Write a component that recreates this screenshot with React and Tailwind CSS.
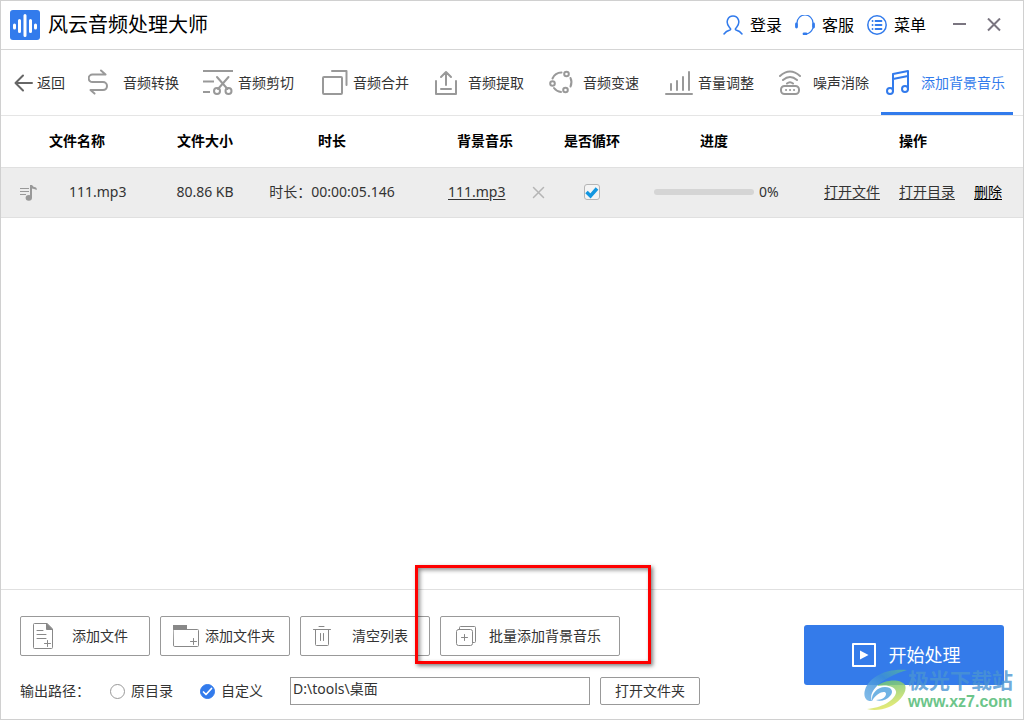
import { useState } from 'react';

const ICON = {
    fill: 'none',
    stroke: 'currentColor',
    strokeWidth: 2,
    strokeLinecap: 'round',
    strokeLinejoin: 'round',
    'aria-hidden': true,
};

const TOOLS = [
    {
        label: '音频转换',
        icon: <path d="M13 2.500l4.500 4H4.500a3.800 3.800 0 0 0 0 7.600H15a4 4 0 0 1 0 8H2.500l4 3.500" />,
    },
    {
        label: '音频剪切',
        icon: (
            <>
                <path d="M0 3h30M0 13.500h11M0 24h7" strokeLinecap="butt" />
                <path d="M14 9l10.500 12M25.500 9L15 21" />
                <circle cx="14" cy="23" r="3" />
                <circle cx="25.500" cy="23" r="3" />
            </>
        ),
    },
    {
        label: '音频合并',
        icon: (
            <>
                <rect x="5" y="9" width="19" height="17" rx="1" />
                <path d="M14 3h14.500v14" />
            </>
        ),
    },
    {
        label: '音频提取',
        icon: <path d="M3 13v13h20V13M8 21h10M13 17V4M8 9l5-5 5 5" />,
    },
    {
        label: '音频变速',
        icon: (
            <>
                <circle cx="18.500" cy="6" r="2.300" />
                <circle cx="4.500" cy="15.500" r="2.300" />
                <circle cx="17.500" cy="22" r="2.300" />
                <path d="M4.500 10.500a10 10 0 0 1 9-6M6 20a10 10 0 0 0 7 4M22.500 10a10 10 0 0 1 0 8.500" />
            </>
        ),
    },
    {
        label: '音量调整',
        icon: <path d="M3 26h26M8 22v-6M14 22v-9M20 22V9M26 22V4" />,
    },
    {
        label: '噪声消除',
        icon: (
            <>
                <rect x="3" y="18" width="18" height="8" rx="3.500" />
                <path d="M2 8q10-9 20 0M5 12q7-6 14 0M9 15.500q3-2.500 6 0M8 22h.1M12 22h.1M16 22h.1" />
            </>
        ),
    },
];

function Tool({ label, icon, active }) {
    return (
        <button
            type="button"
            className={
                active
                    ? 'ml-[11px] flex h-[65px] shrink-0 items-center gap-[5px] border-b-[3px] border-[#327bec] pt-1 pr-2 pl-[5px] text-[#327bec]'
                    : 'flex h-[65px] shrink-0 items-center gap-[5px] pt-px'
            }
        >
            <svg
                {...ICON}
                viewBox="0 0 30 30"
                className={active ? 'size-[30px]' : 'size-[30px] text-[#999]'}
            >
                {icon}
            </svg>
            {label}
        </button>
    );
}

function HeaderButton({ label, children }) {
    return (
        <button type="button" className="flex items-center gap-[7px] text-base">
            <svg {...ICON} strokeWidth={1.5} viewBox="0 0 20 20" className="size-5 text-[#327bec]">
                {children}
            </svg>
            {label}
        </button>
    );
}

function RadioOption({ label, value, selected, onSelect }) {
    return (
        <label className="flex items-center gap-1.5">
            <span className="grid">
                <input
                    type="radio"
                    name="output"
                    value={value}
                    checked={selected}
                    onChange={() => onSelect(value)}
                    className="col-start-1 row-start-1 size-[15px] appearance-none rounded-full border border-[#999] bg-white checked:border-[#327bec] checked:bg-[#327bec]"
                />
                {selected && (
                    <svg
                        {...ICON}
                        viewBox="0 0 15 15"
                        className="pointer-events-none col-start-1 row-start-1 size-[15px] text-white"
                    >
                        <path d="M3.500 8l2.500 2.500 5.500-6" strokeWidth="1.700" />
                    </svg>
                )}
            </span>
            {label}
        </label>
    );
}

export default function App() {
    const [output, setOutput] = useState('custom');
    const [loop, setLoop] = useState(true);
    const [path, setPath] = useState('D:\\tools\\桌面');

    return (
        <div className="flex min-h-screen flex-col overflow-hidden border border-[#d0d0d0] bg-white font-['Noto_Sans','Noto_Sans_CJK_SC',sans-serif] text-sm text-[#333]">
            <header className="flex h-[49px] items-center border-b border-[#d5d5d5] pr-[22px] pl-[9px] text-black">
                <svg viewBox="0 0 30 30" className="size-[30px]" aria-hidden="true">
                    <rect width="30" height="30" rx="3" fill="#327bec" />
                    <path
                        d="M4.500 15v3M9.500 10.500v11M15 5.500v20M20.500 10.500v11M25.500 15v3"
                        stroke="#fff"
                        strokeWidth="3"
                        strokeLinecap="round"
                    />
                </svg>
                <h1 className="ml-2 text-xl">风云音频处理大师</h1>

                <div className="ml-auto flex gap-[13px]">
                    <HeaderButton label="登录">
                        <path d="M1 19q2-3 6-4c1.500-.6 0-2-.8-3C2 7 5 1 10 1s8 6 3.800 11c-.8 1-2.300 2.400-.8 3q4 1 6 4" />
                    </HeaderButton>
                    <HeaderButton label="客服">
                        <path d="M2 8a8 8 0 0 1 16 0M18 13q-2 5-6.500 6" strokeWidth="1.200" />
                        <path d="M1.500 9v3M18.500 9v3M9 18.800h2" strokeWidth="2.800" />
                    </HeaderButton>
                    <HeaderButton label="菜单">
                        <circle cx="10" cy="10" r="9.200" />
                        <path d="M5.500 6h.1M5.500 10h.1M5.500 14h.1M8.500 6h6M8.500 10h6M8.500 14h6" strokeWidth="1.800" />
                    </HeaderButton>
                </div>
                <div className="ml-[27px] flex items-center gap-5 text-[#7a7580]">
                    <button type="button" aria-label="最小化">
                        <svg {...ICON} strokeLinecap="butt" viewBox="0 0 14 14" className="size-3.5">
                            <path d="M0 6h13" />
                        </svg>
                    </button>
                    <button type="button" aria-label="关闭">
                        <svg {...ICON} strokeLinecap="butt" viewBox="0 0 14 14" className="size-3.5">
                            <path d="M1 .5l12 12M13 .5L1 12.500" />
                        </svg>
                    </button>
                </div>
            </header>

            <nav className="flex h-[66px] border-b border-[#e5e5e5] pl-[13px]">
                <button type="button" className="mr-[23px] flex shrink-0 items-center gap-1 pt-px">
                    <svg {...ICON} viewBox="0 0 19 18" className="h-[18px] w-[19px] text-[#666]">
                        <path d="M18 9H2M9 1.500L1.500 9 9 16.500" />
                    </svg>
                    返回
                </button>
                <div className="mr-px flex gap-6">
                    {TOOLS.map((tool) => (
                        <Tool key={tool.label} {...tool} />
                    ))}
                </div>
                <Tool
                    label="添加背景音乐"
                    active
                    icon={
                        <>
                            <circle cx="4" cy="23" r="3" />
                            <circle cx="19" cy="21" r="3" />
                            <path d="M7 23V6l15-3v18M7 11l15-3" />
                        </>
                    }
                />
            </nav>

            <main className="flex-1">
                <table className="w-full table-fixed border-collapse">
                    <colgroup>
                        <col className="w-[152px]" />
                        <col className="w-[104px]" />
                        <col className="w-[150px]" />
                        <col className="w-[156px]" />
                        <col className="w-[58px]" />
                        <col className="w-[186px]" />
                        <col />
                    </colgroup>
                    <thead>
                        <tr className="h-[51px] text-black">
                            <th>文件名称</th>
                            <th>文件大小</th>
                            <th>时长</th>
                            <th>背景音乐</th>
                            <th>是否循环</th>
                            <th>进度</th>
                            <th className="pr-1">操作</th>
                        </tr>
                    </thead>
                    <tbody>
                        <tr className="h-[50px] border-y border-[#e0e0e0] bg-[#ededed] text-center">
                            <td>
                                <div className="flex items-center gap-8 pl-[19px]">
                                    <svg viewBox="0 0 17 17" className="size-[17px] text-[#999]" aria-hidden="true">
                                        <path d="M0 4.500h9M0 7.500h9M0 10.500h6" stroke="currentColor" strokeWidth="1.200" />
                                        <ellipse cx="8.800" cy="13.800" rx="3.200" ry="2.900" fill="currentColor" />
                                        <path d="M10 14V1h2q1 2 4 2.500.9.500.8 2.500Q14 4.500 12 4.500V14z" fill="currentColor" />
                                    </svg>
                                    111.mp3
                                </div>
                            </td>
                            <td>80.86 KB</td>
                            <td className="whitespace-nowrap">时长：00:00:05.146</td>
                            <td>
                                <div className="flex items-center gap-[27px] pl-[41px]">
                                    <a href="#music" className="underline underline-offset-2">111.mp3</a>
                                    <button type="button" aria-label="移除背景音乐">
                                        <svg {...ICON} viewBox="0 0 13 13" className="size-[13px] text-[#b5b5b5]">
                                            <path d="M1.500 1.500l10 10M11.500 1.500l-10 10" strokeWidth="1.500" />
                                        </svg>
                                    </button>
                                </div>
                            </td>
                            <td>
                                <div className="grid justify-center">
                                    <input
                                        type="checkbox"
                                        aria-label="是否循环"
                                        checked={loop}
                                        onChange={(e) => setLoop(e.target.checked)}
                                        className="col-start-1 row-start-1 size-4 appearance-none rounded-[3px] border border-[#b5b5b5] bg-[#f4f4f4]"
                                    />
                                    {loop && (
                                        <svg
                                            {...ICON}
                                            viewBox="0 0 16 16"
                                            className="pointer-events-none col-start-1 row-start-1 size-4 text-[#1296e0]"
                                        >
                                            <path d="M2.500 8l4 4 6.500-7.500" strokeWidth="3.500" strokeLinecap="butt" strokeLinejoin="miter" />
                                        </svg>
                                    )}
                                </div>
                            </td>
                            <td>
                                <div className="flex items-center gap-[5px] pl-[33px]">
                                    <div
                                        role="progressbar"
                                        aria-label="进度"
                                        aria-valuenow={0}
                                        className="h-1.5 w-[100px] rounded-full bg-[#d5d5d5]"
                                    />
                                    0%
                                </div>
                            </td>
                            <td className="pr-1">
                                <div className="flex justify-center gap-[19px] whitespace-nowrap underline underline-offset-2">
                                    <a href="#file">打开文件</a>
                                    <a href="#folder">打开目录</a>
                                    <a href="#delete" className="text-black">删除</a>
                                </div>
                            </td>
                        </tr>
                    </tbody>
                </table>
            </main>

            <footer className="flex items-start justify-between border-t border-[#e0e0e0] pr-[19px] pb-3.5 pl-[19px]">
                <div className="flex flex-col gap-[21px] pt-[26px]">
                    <div className="flex gap-2.5">
                        <button type="button" className="flex h-10 w-[130px] items-center justify-between rounded-xs border border-[#999] pr-[21px] pl-3">
                            <svg {...ICON} strokeWidth={1} viewBox="0 0 20 26" className="h-[26px] w-5 text-[#888]">
                                <path d="M13.500.5h-12q-1 0-1 1v23q0 1 1 1h17q1 0 1-1v-18zM4 7.500h6M4 11.500h9M4 15.500h9M14.500 17.500v6M11.500 20.500h6" />
                                <path d="M13.500.5v6h6z" fill="currentColor" />
                            </svg>
                            添加文件
                        </button>
                        <button type="button" className="flex h-10 w-[130px] items-center justify-between rounded-xs border border-[#999] pr-3.5 pl-3">
                            <svg {...ICON} strokeWidth={1} viewBox="0 0 26 22" className="h-[22px] w-[26px] text-[#888]">
                                <path d="M.5 4.500h24q1 0 1 1v15q0 1-1 1h-23q-1 0-1-1zM20.500 13.500v6M17.500 16.500h6" />
                                <path d="M0 0h14v4.500H0z" fill="currentColor" stroke="none" />
                            </svg>
                            添加文件夹
                        </button>
                        <button type="button" className="flex h-10 w-[130px] items-center justify-between rounded-xs border border-[#999] pr-[21px] pl-3">
                            <svg {...ICON} strokeWidth={1} viewBox="0 0 18 20" className="h-5 w-[18px] text-[#888]">
                                <path d="M.5 3.500h17M6 .5h5M2.500 3.500v15q0 1 1 1h11q1 0 1-1v-15M7.500 7.500v7M10.500 7.500v7" />
                            </svg>
                            清空列表
                        </button>
                        <div className="relative">
                            <button type="button" className="flex h-10 w-[180px] items-center justify-between rounded-xs border border-[#999] pr-[18px] pl-[15px]">
                                <svg {...ICON} strokeWidth={1} viewBox="0 0 20 20" className="size-5 text-[#888]">
                                    <rect x=".5" y="3.500" width="16" height="16" rx="2" />
                                    <path d="M3.500 3.500v-2q0-1 1-1h14q1 0 1 1v14q0 1-1 1h-2M8.500 8.500v6M5.500 11.500h6" />
                                </svg>
                                批量添加背景音乐
                            </button>
                            <div className="pointer-events-none absolute -top-[51px] -left-[25px] h-[99px] w-[236px] border-[3px] border-[#fe0000] shadow-[2px_2px_4px_rgba(0,0,0,0.5),inset_2px_2px_4px_rgba(0,0,0,0.45)]" />
                        </div>
                    </div>

                    <div className="flex items-center">
                        <span className="w-[90px]">输出路径：</span>
                        <div className="flex gap-[27px]">
                            <RadioOption label="原目录" value="source" selected={output === 'source'} onSelect={setOutput} />
                            <RadioOption label="自定义" value="custom" selected={output === 'custom'} onSelect={setOutput} />
                        </div>
                        <input
                            type="text"
                            aria-label="输出路径"
                            value={path}
                            onChange={(e) => setPath(e.target.value)}
                            className="ml-[27px] h-7 w-[300px] border border-[#999] px-0.5 pb-1.5"
                        />
                        <button type="button" className="ml-2.5 h-7 w-[100px] rounded-xs border border-[#999]">
                            打开文件夹
                        </button>
                    </div>
                </div>

                <div className="relative mt-[35px]">
                    <button type="button" className="flex h-[60px] w-[200px] items-center justify-center gap-[13px] rounded-[3px] bg-[#347bea] pl-1 text-lg text-white">
                        <svg {...ICON} viewBox="0 0 24 24" className="size-6">
                            <rect x="1" y="1" width="22" height="22" />
                            <path d="M8 7.500v9l8.500-4.500z" fill="currentColor" stroke="none" />
                        </svg>
                        开始处理
                    </button>
                    <div className="pointer-events-none absolute top-[43px] -right-[9px] flex items-center font-bold whitespace-nowrap">
                        <svg viewBox="0 0 44 42" className="h-[42px] w-11 opacity-85" aria-hidden="true">
                            <defs>
                                <linearGradient id="sweep" x1="1" y1="0" x2="0" y2="1">
                                    <stop offset="0" stopColor="#58b59a" />
                                    <stop offset=".4" stopColor="#3c8fd8" />
                                    <stop offset="1" stopColor="#6fb2e6" />
                                </linearGradient>
                                <linearGradient id="swirl" x1="0" y1="0" x2=".3" y2="1">
                                    <stop offset="0" stopColor="#5cc080" />
                                    <stop offset="1" stopColor="#e2e860" />
                                </linearGradient>
                            </defs>
                            <path d="M43 1C22-1 5 8 1 21c-2 6 1 12 7 11C4 24 14 10 43 1z" fill="url(#sweep)" />
                            <path d="M13 17C20 11 36 9 41 16c3 7-6 18-16 22-7 3-15 4-22 2 14-1 27-8 29-16 1-6-8-9-19-7z" fill="url(#swirl)" />
                            <path d="M8 32c-1-7 5-14 13-14 7 0 9 5 5 9-3 4-10 6-14 4 6 0 10-3 10-6 0-4-9-2-14 7z" fill="#58a6e0" />
                        </svg>
                        <div>
                            <div className="text-[21px] leading-6 text-[#4a94d2]/80">极光下载站</div>
                            <div className="font-['Liberation_Sans',sans-serif] text-base leading-5 text-[#6cc58a]">www.xz7.com</div>
                        </div>
                    </div>
                </div>
            </footer>
        </div>
    );
}
